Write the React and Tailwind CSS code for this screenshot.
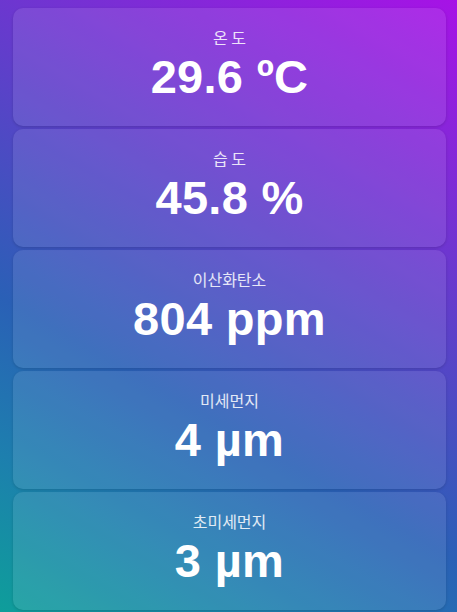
const readings = [
  { label: '온 도', value: '29.6 ºC' },
  { label: '습 도', value: '45.8 %' },
  { label: '이산화탄소', value: '804 ppm' },
  { label: '미세먼지', value: '4 µm' },
  { label: '초미세먼지', value: '3 µm' },
];

function ReadingCard({ label, value }) {
  return (
    <div className="h-[118px] rounded-[10px] bg-white/10 shadow-[0_1px_3px_rgba(0,0,0,0.15)] flex flex-col items-center pt-[17px]">
      <div className="text-[16px] leading-6 text-white/85 font-['Noto_Sans_CJK_KR',sans-serif]">
        {label}
      </div>
      <div className="mt-[2px] text-[47px] leading-[52px] tracking-[0.3px] font-bold text-white font-['Liberation_Sans',Arial,sans-serif]">
        {value}
      </div>
    </div>
  );
}

export default function App() {
  return (
    <div className="w-[457px] h-[612px] overflow-hidden bg-[linear-gradient(30deg,#0e9e9a_0%,#1d7fae_18%,#2a60b6_36%,#a712e6_100%)]">
      <div className="pt-2 pl-[13px] pr-[11px] flex flex-col gap-[3px]">
        {readings.map((r) => (
          <ReadingCard key={r.label} label={r.label} value={r.value} />
        ))}
      </div>
    </div>
  );
}
